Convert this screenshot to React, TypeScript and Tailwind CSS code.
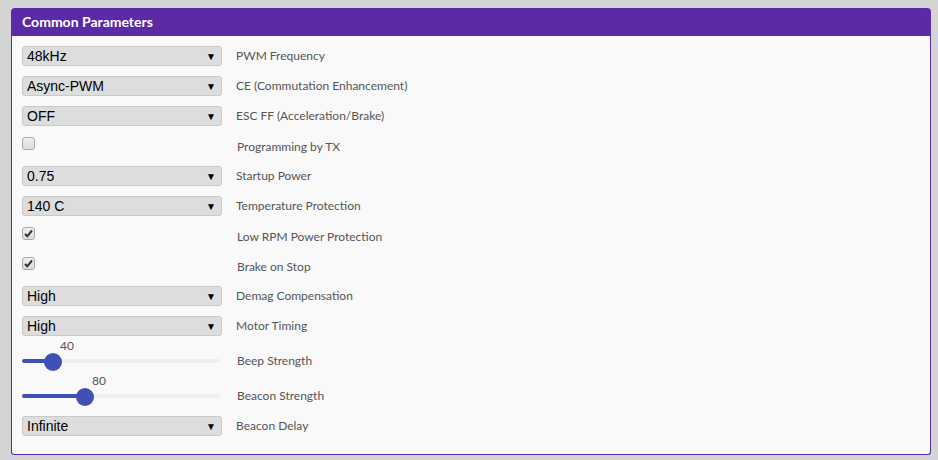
import React from "react";

type Row =
  | { kind: "select"; label: string; value: string }
  | { kind: "check"; label: string; checked: boolean }
  | { kind: "slider"; label: string; value: number };

const rows: Row[] = [
  { kind: "select", label: "PWM Frequency", value: "48kHz" },
  { kind: "select", label: "CE (Commutation Enhancement)", value: "Async-PWM" },
  { kind: "select", label: "ESC FF (Acceleration/Brake)", value: "OFF" },
  { kind: "check", label: "Programming by TX", checked: false },
  { kind: "select", label: "Startup Power", value: "0.75" },
  { kind: "select", label: "Temperature Protection", value: "140 C" },
  { kind: "check", label: "Low RPM Power Protection", checked: true },
  { kind: "check", label: "Brake on Stop", checked: true },
  { kind: "select", label: "Demag Compensation", value: "High" },
  { kind: "select", label: "Motor Timing", value: "High" },
  { kind: "slider", label: "Beep Strength", value: 40 },
  { kind: "slider", label: "Beacon Strength", value: 80 },
  { kind: "select", label: "Beacon Delay", value: "Infinite" },
];

const labelCls =
  "font-['Lato',sans-serif] text-[12px] leading-[16px] text-[#555555]";

const Select = ({ value }: { value: string }) => (
  <div className="flex h-[20px] w-[200px] items-center justify-between rounded-[3px] border border-[#c9c9c9] bg-[#dddddd] pl-[4px] pr-[5px] font-['Liberation_Sans',Arial,sans-serif] text-[14px] text-black">
    <span>{value}</span>
    <span className="text-[10px]">▼</span>
  </div>
);

const Check = ({ checked }: { checked: boolean }) => (
  <div className="mt-[6px] flex h-[13px] w-[13px] items-center justify-center rounded-[3px] border border-[#a9a9a9] bg-gradient-to-b from-[#f0f0f0] to-[#dcdcdc]">
    {checked && (
      <svg width="9" height="9" viewBox="0 0 9 9">
        <path d="M1 5 L3.3 7.3 L8 1.5" stroke="#333" strokeWidth="2" fill="none" />
      </svg>
    )}
  </div>
);

const Slider = ({ value }: { value: number }) => {
  const left = ((value - 12.5) / 225) * 180;
  return (
    <div className="relative h-full w-[200px]">
      <span
        className="absolute top-[-4px] font-['Lato',sans-serif] text-[12px] text-[#555555]"
        style={{ left: left + 16 }}
      >
        {value}
      </span>
      <div className="absolute left-0 top-[18px] h-[4px] w-[198px] rounded-full bg-[#eeeeee]" />
      <div
        className="absolute left-0 top-[18px] h-[4px] rounded-full bg-[#3f51b5]"
        style={{ width: left + 9 }}
      />
      <div
        className="absolute top-[12px] h-[18px] w-[18px] rounded-full bg-[#3f51b5]"
        style={{ left }}
      />
    </div>
  );
};

export default function App() {
  return (
    <div className="min-h-screen bg-[#d4d4d4] pl-[11px] pt-[8px]">
      <div className="w-[920px]">
        <div className="h-[28px] rounded-t-[4px] bg-[#5b2aa6] pl-[11px] font-['Lato',sans-serif] text-[14px] font-bold leading-[28px] text-white">
          Common Parameters
        </div>
        <div className="rounded-b-[3px] border-x border-b border-[#5b2aa6] bg-[#f9f9f9] pb-[13px] pl-[10px] pt-[5px]">
          {rows.map((r) => {
            if (r.kind === "slider") {
              return (
                <div key={r.label} className="flex h-[35px]">
                  <div className="w-[215px]">
                    <Slider value={r.value} />
                  </div>
                  <div className={`${labelCls} pt-[12px]`}>{r.label}</div>
                </div>
              );
            }
            if (r.kind === "check") {
              return (
                <div key={r.label} className="flex h-[30px]">
                  <div className="w-[215px]">
                    <Check checked={r.checked} />
                  </div>
                  <div className={`${labelCls} pt-[8px]`}>{r.label}</div>
                </div>
              );
            }
            return (
              <div key={r.label} className="flex h-[30px] items-center">
                <div className="w-[214px]">
                  <Select value={r.value} />
                </div>
                <div className={labelCls}>{r.label}</div>
              </div>
            );
          })}
        </div>
      </div>
    </div>
  );
}
